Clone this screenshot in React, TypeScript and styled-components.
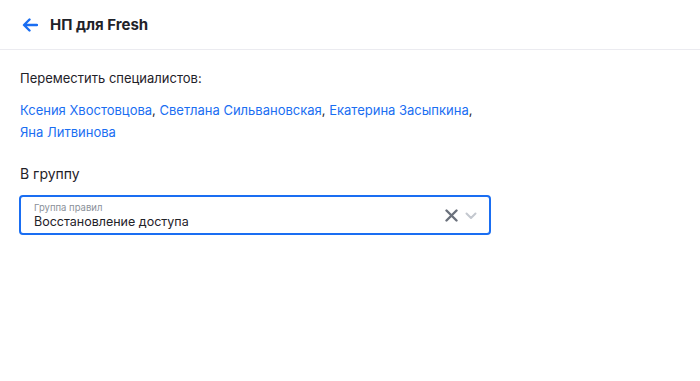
import React from "react";
import styled, { createGlobalStyle } from "styled-components";

const GlobalStyle = createGlobalStyle`
  body {
    margin: 0;
    background: #fff;
    font-family: Inter, "Noto Sans", sans-serif;
    color: #1f2229;
  }
`;

const Header = styled.div`
  height: 49px;
  display: flex;
  align-items: center;
  gap: 12px;
  padding: 0 20px 0 22px;
  border-bottom: 1px solid #ebebf0;
`;

const BackButton = styled.button`
  border: none;
  background: none;
  padding: 0;
  display: flex;
  cursor: pointer;
`;

const Title = styled.h1`
  margin: 0;
  font-size: 15px;
  font-weight: 700;
  color: #1f2229;
`;

const Body = styled.div`
  padding: 19px 20px;
`;

const Label = styled.div<{ size?: number }>`
  font-size: ${({ size }) => size ?? 13}px;
  line-height: 18px;
  color: #1f2229;
`;

const Names = styled.div`
  margin-top: 12px;
  font-size: 13px;
  line-height: 22px;
  color: #1f2229;
`;

const NameLink = styled.a`
  color: #1a6ef2;
  text-decoration: none;
  cursor: pointer;
`;

const Section = styled.div`
  margin-top: 22px;
`;

const Select = styled.div`
  margin: 12px 0 0 -1px;
  width: 472px;
  height: 40px;
  box-sizing: border-box;
  border: 2px solid #1a6ef2;
  border-radius: 4px;
  display: flex;
  align-items: center;
  padding: 1px 12px 0 13px;
`;

const SelectText = styled.div`
  flex: 1;
  display: flex;
  flex-direction: column;
`;

const SmallLabel = styled.span`
  font-size: 9.5px;
  line-height: 12px;
  color: #8a8f99;
`;

const Value = styled.span`
  font-size: 12.5px;
  line-height: 16px;
  color: #1f2229;
`;

const Icons = styled.div`
  display: flex;
  align-items: center;
  gap: 7px;
`;

const names = [
  "Ксения Хвостовцова",
  "Светлана Сильвановская",
  "Екатерина Засыпкина",
  "Яна Литвинова",
];

export default function App() {
  return (
    <>
      <GlobalStyle />
      <Header>
        <BackButton>
          <svg width="16" height="14" viewBox="0 0 16 14" fill="none">
            <path d="M15 7H2.5M7.5 1.5 2 7l5.5 5.5" stroke="#1a6ef2" strokeWidth="2.4" strokeLinecap="round" strokeLinejoin="round" />
          </svg>
        </BackButton>
        <Title>НП для Fresh</Title>
      </Header>
      <Body>
        <Label>Переместить специалистов:</Label>
        <Names>
          {names.map((n, i) => (
            <React.Fragment key={n}>
              <NameLink>{n}</NameLink>
              {i < names.length - 1 && ", "}
              {i === 2 && <br />}
            </React.Fragment>
          ))}
        </Names>
        <Section>
          <Label size={14}>В группу</Label>
          <Select>
            <SelectText>
              <SmallLabel>Группа правил</SmallLabel>
              <Value>Восстановление доступа</Value>
            </SelectText>
            <Icons>
              <svg width="13" height="13" viewBox="0 0 13 13">
                <path d="M1.5 1.5l10 10M11.5 1.5l-10 10" stroke="#6b717c" strokeWidth="2.4" strokeLinecap="round" />
              </svg>
              <svg width="12" height="8" viewBox="0 0 12 8" fill="none">
                <path d="M1.5 1.5 6 6l4.5-4.5" stroke="#c4c8cf" strokeWidth="2" strokeLinecap="round" strokeLinejoin="round" />
              </svg>
            </Icons>
          </Select>
        </Section>
      </Body>
    </>
  );
}
